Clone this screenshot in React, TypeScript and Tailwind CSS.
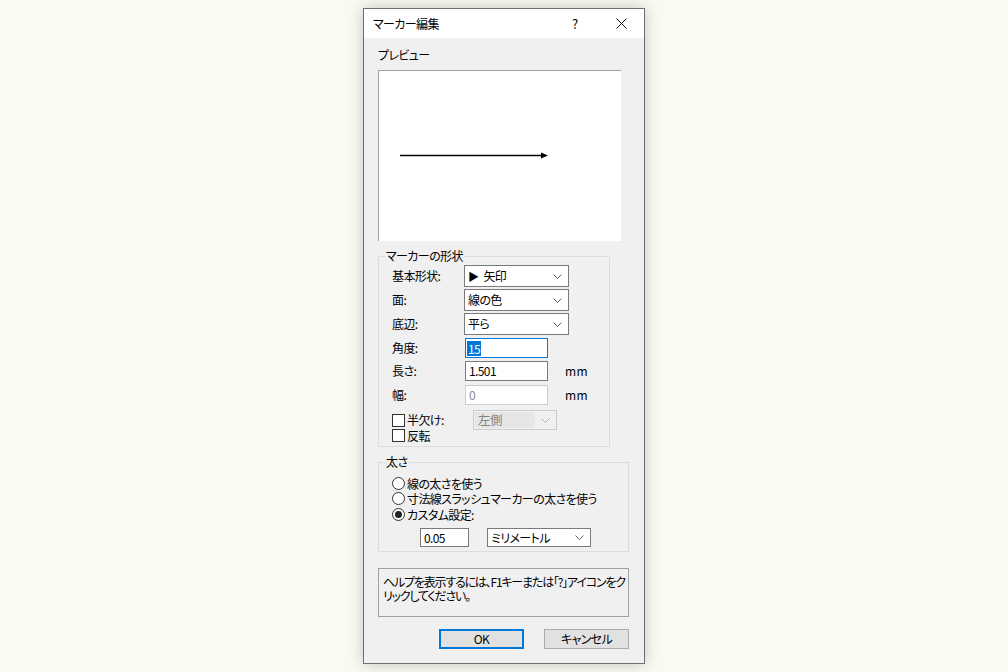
const font = "[font-family:'Noto_Sans_CJK_JP',sans-serif] [font-feature-settings:'palt']";

function Chevron({ disabled }: { disabled?: boolean }) {
  return (
    <svg width="9" height="5" viewBox="0 0 9 5" className="shrink-0">
      <polyline
        points="0.5,0.5 4.5,4.5 8.5,0.5"
        fill="none"
        stroke={disabled ? "#b5b5b5" : "#606060"}
        strokeWidth="1"
      />
    </svg>
  );
}

function Select({ value, className }: { value: React.ReactNode; className: string }) {
  return (
    <div
      className={`flex items-center bg-white border border-[#7a7a7a] pl-[3px] pr-[6px] ${className}`}
    >
      <span className="flex-1 leading-none">{value}</span>
      <Chevron />
    </div>
  );
}

function Checkbox({ label }: { label: string }) {
  return (
    <div className="flex items-center h-[15px]">
      <span className="w-[13px] h-[13px] border border-[#333333] bg-white shrink-0" />
      <span className="ml-[2px] leading-none">{label}</span>
    </div>
  );
}

function Radio({ label, checked }: { label: string; checked?: boolean }) {
  return (
    <div className="flex items-center h-[15px]">
      <span className="w-[13px] h-[13px] rounded-full border border-[#333333] bg-white shrink-0 flex items-center justify-center">
        {checked && <span className="w-[7px] h-[7px] rounded-full bg-[#222222]" />}
      </span>
      <span className="ml-[2px] leading-none">{label}</span>
    </div>
  );
}

function GroupBox({ title, className, children }: { title: string; className: string; children: React.ReactNode }) {
  return (
    <div className={`relative border border-[#dcdcdc] ${className}`}>
      <span className="absolute left-[6px] -top-[9px] px-[1px] bg-[#f0f0f0] leading-[16px]">{title}</span>
      {children}
    </div>
  );
}

export default function App() {
  return (
    <div className={`min-h-[672px] w-full bg-[#fafaf2] pt-[8px] text-[12px] tracking-[-0.6px] text-black ${font}`}>
      <div className="mx-auto w-[282px] h-[656px] border border-[#6f6f6f] flex flex-col bg-[#f0f0f0] shadow-[0_0_14px_rgba(0,0,0,0.22)]">
        {/* Title bar */}
        <div className="h-[29px] bg-white flex items-center shrink-0">
          <span className="pl-[9px]">マーカー編集</span>
          <div className="ml-auto flex h-full">
            <div className="w-[46px] flex items-center justify-center text-[13px] tracking-normal">?</div>
            <div className="w-[46px] flex items-center justify-center">
              <svg width="11" height="11" viewBox="0 0 11 11">
                <path d="M0.5 0.5L10.5 10.5M10.5 0.5L0.5 10.5" stroke="#111111" strokeWidth="1" />
              </svg>
            </div>
          </div>
        </div>

        {/* Body */}
        <div className="flex-1 flex flex-col pl-[14px]">
          <div className="mt-[9px] leading-[16px]">プレビュー</div>
          <div className="mt-[7px] w-[243px] h-[171px] bg-white border-t border-l border-[#a0a0a0]">
            <svg width="242" height="170" viewBox="0 0 242 170">
              <line x1="21" y1="84.5" x2="165" y2="84.5" stroke="#000000" strokeWidth="1.3" />
              <polygon points="162,81.5 169,84.5 162,87.5" fill="#000000" />
            </svg>
          </div>

          {/* マーカーの形状 */}
          <GroupBox title="マーカーの形状" className="mt-[15px] w-[232px] h-[191px] pl-[13px] pt-[8px]">
            <div className="flex flex-col">
              <div className="flex items-center h-[22px]">
                <span className="w-[72px]">基本形状:</span>
                <Select value={<><span className="text-[11px] mr-[5px]">▶</span>矢印</>} className="w-[105px] h-[22px]" />
              </div>
              <div className="flex items-center h-[22px] mt-[2px]">
                <span className="w-[72px]">面:</span>
                <Select value="線の色" className="w-[105px] h-[22px]" />
              </div>
              <div className="flex items-center h-[22px] mt-[2px]">
                <span className="w-[72px]">底辺:</span>
                <Select value="平ら" className="w-[105px] h-[22px]" />
              </div>
              <div className="flex items-center h-[20px] mt-[3px]">
                <span className="w-[73px]">角度:</span>
                <div className="w-[83px] h-[20px] border border-[#0078d7] bg-white flex items-center pl-[1px]">
                  <span className="bg-[#0078d7] text-white leading-[15px] px-[1px]">15</span>
                </div>
              </div>
              <div className="flex items-center h-[20px] mt-[3px]">
                <span className="w-[73px]">長さ:</span>
                <div className="w-[83px] h-[20px] border border-[#7a7a7a] bg-white flex items-center pl-[3px]">
                  1.501
                </div>
                <span className="ml-[17px] tracking-[0.5px]">mm</span>
              </div>
              <div className="flex items-center h-[20px] mt-[4px]">
                <span className="w-[73px]">幅:</span>
                <div className="w-[83px] h-[20px] border border-[#cccccc] bg-white flex items-center pl-[3px] text-[#8a8a8a]">
                  0
                </div>
                <span className="ml-[17px] tracking-[0.5px]">mm</span>
              </div>
              <div className="flex items-center h-[20px] mt-[5px]">
                <div className="w-[81px]">
                  <Checkbox label="半欠け:" />
                </div>
                <div className="w-[84px] h-[20px] border border-[#cccccc] bg-[#f0f0f0] flex items-center pl-[1px] pr-[6px]">
                  <span className="flex-1 h-[16px] bg-[#e6e6e6] text-[#838383] leading-[16px] pl-[3px] mr-[6px] text-[12.5px]">左側</span>
                  <Chevron disabled />
                </div>
              </div>
              <div className="-mt-[2px]">
                <Checkbox label="反転" />
              </div>
            </div>
          </GroupBox>

          {/* 太さ */}
          <GroupBox title="太さ" className="mt-[15px] w-[251px] h-[90px] pl-[13px] pt-[13px]">
            <div className="flex flex-col">
              <Radio label="線の太さを使う" />
              <Radio label="寸法線スラッシュマーカーの太さを使う" />
              <div className="mt-[1px]">
                <Radio label="カスタム設定:" checked />
              </div>
              <div className="flex items-center mt-[6px] pl-[28px]">
                <div className="w-[49px] h-[19px] border border-[#7a7a7a] bg-white flex items-center pl-[3px]">
                  0.05
                </div>
                <Select value="ミリメートル" className="ml-[18px] w-[104px] h-[19px]" />
              </div>
            </div>
          </GroupBox>

          {/* Help */}
          <div className="mt-[16px] w-[251px] h-[49px] border border-[#a0a0a0] pl-[4px] pt-[6px] leading-[14px] whitespace-nowrap tracking-[-1.2px]">
            ヘルプを表示するには、F1キーまたは「?」アイコンをク
            <br />
            リックしてください。
          </div>

          {/* Buttons */}
          <div className="mt-[12px] w-[251px] flex justify-end gap-[20px]">
            <button className="w-[85px] h-[20px] bg-[#e1e1e1] border-2 border-[#0078d7] flex items-center justify-center">
              OK
            </button>
            <button className="w-[85px] h-[20px] bg-[#e1e1e1] border border-[#adadad] flex items-center justify-center">
              キャンセル
            </button>
          </div>
        </div>
      </div>
    </div>
  );
}
